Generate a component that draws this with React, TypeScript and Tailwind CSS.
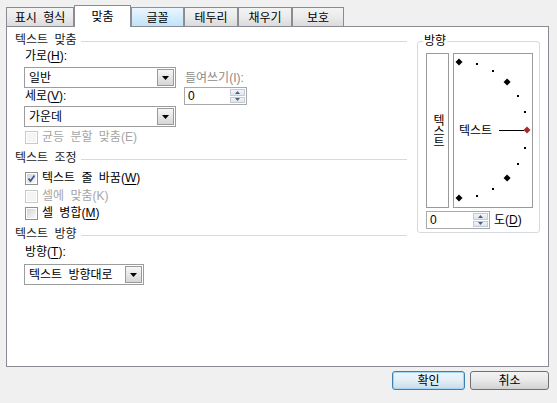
import type { ReactNode } from "react";

const tabs = [
  { label: "표시 형식", w: "w-[68px]" },
  { label: "맞춤", w: "w-[57px]", active: true },
  { label: "글꼴", w: "w-[53px]", hover: true },
  { label: "테두리", w: "w-[54px]" },
  { label: "채우기", w: "w-[54px]" },
  { label: "보호", w: "w-[52px]" },
];

// dial angles, 90 .. -90 in steps of 15
const angles = [90, 75, 60, 45, 30, 15, 0, -15, -30, -45, -60, -75, -90];

function U({ c }: { c: string }) {
  return <span className="underline underline-offset-[2px]">{c}</span>;
}

function Header({ title }: { title: string }) {
  return (
    <div className="flex h-[16px] items-center">
      <span className="text-[#1a1a1a]">{title}</span>
      <div className="ml-[4px] mt-[2px] h-px flex-1 bg-[#d5dadf]" />
    </div>
  );
}

function Arrow() {
  return (
    <svg width="7" height="4" viewBox="0 0 7 4">
      <polygon points="0,0 7,0 3.5,4" fill="#000" />
    </svg>
  );
}

function Dropdown({ value, w }: { value: string; w: string }) {
  return (
    <div
      className={`flex h-[21px] ${w} items-center border border-[#9c9c9c] bg-white pl-[4px] pr-[1px]`}
    >
      <span className="flex-1">{value}</span>
      <div className="flex h-[17px] w-[17px] items-center justify-center border border-[#9a9a9a] bg-linear-to-b from-[#f7f7f7] to-[#d6d6d6]">
        <Arrow />
      </div>
    </div>
  );
}

function Spin({ w }: { w: string }) {
  return (
    <div
      className={`flex h-[18px] ${w} items-stretch border border-[#a9a9a9] bg-white p-px`}
    >
      <span className="flex-1 pl-[2px] leading-[14px]">0</span>
      <div className="flex w-[15px] flex-col gap-px">
        <div className="flex flex-1 items-center justify-center border border-[#c3cbd6] bg-linear-to-b from-[#f2f5f9] to-[#dfe5ec]">
          <svg width="5" height="3" viewBox="0 0 5 3">
            <polygon points="2.5,0 5,3 0,3" fill="#4d6185" />
          </svg>
        </div>
        <div className="flex flex-1 items-center justify-center border border-[#c3cbd6] bg-linear-to-b from-[#f2f5f9] to-[#dfe5ec]">
          <svg width="5" height="3" viewBox="0 0 5 3">
            <polygon points="0,0 5,0 2.5,3" fill="#4d6185" />
          </svg>
        </div>
      </div>
    </div>
  );
}

function Check({
  checked,
  disabled,
  children,
}: {
  checked?: boolean;
  disabled?: boolean;
  children: ReactNode;
}) {
  return (
    <div className="flex h-[16px] items-center pl-[10px]">
      <div
        className={`flex h-[13px] w-[13px] items-center justify-center border p-px ${
          disabled ? "border-[#c9c9c9]" : "border-[#8e8f8f]"
        }`}
      >
        <div
          className={`relative h-full w-full ${
            disabled
              ? "bg-[#f4f4f4]"
              : "bg-linear-to-br from-[#d3d3d3] to-[#fafafa]"
          }`}
        >
          {checked ? (
            <svg
              className="absolute left-0 top-0"
              width="9"
              height="9"
              viewBox="0 0 9 9"
            >
              <path
                d="M1.5 4.5 L3.5 7 L7.5 1.5"
                stroke="#3c59a0"
                strokeWidth="1.8"
                fill="none"
              />
            </svg>
          ) : null}
        </div>
      </div>
      <span
        className={`ml-[4px] ${disabled ? "text-[#a6a6a6]" : "text-black"}`}
      >
        {children}
      </span>
    </div>
  );
}

function Dial() {
  const cx = 5;
  const cy = 76;
  const r = 68;
  return (
    <div className="relative h-[155px] w-[80px] border border-[#9a9a9a]">
      <svg width="78" height="153" viewBox="0 0 78 153">
        {angles.map((a) => {
          const x = cx + r * Math.cos((a * Math.PI) / 180);
          const y = cy - r * Math.sin((a * Math.PI) / 180);
          if (a === 0)
            return (
              <polygon
                key={a}
                points={`${x},${y - 3.5} ${x + 3.5},${y} ${x},${y + 3.5} ${x - 3.5},${y}`}
                fill="#a8282c"
              />
            );
          if (a % 45 === 0)
            return (
              <polygon
                key={a}
                points={`${x},${y - 3.5} ${x + 3.5},${y} ${x},${y + 3.5} ${x - 3.5},${y}`}
                fill="#000"
              />
            );
          return (
            <rect
              key={a}
              x={Math.round(x) - 1}
              y={Math.round(y) - 1}
              width="2"
              height="2"
              fill="#000"
            />
          );
        })}
        <line x1="45" y1="76.5" x2="70" y2="76.5" stroke="#000" strokeWidth="1" />
      </svg>
      <span className="absolute left-[5px] top-[69px] leading-[16px]">텍스트</span>
    </div>
  );
}

export default function App() {
  return (
    <div className="flex h-[403px] w-[557px] flex-col overflow-hidden bg-[#f0f0f0] font-['Liberation_Sans','Noto_Sans_CJK_KR',sans-serif] text-[12px] leading-none text-black [word-spacing:3px]">
      {/* tabs */}
      <div className="flex h-[26px] items-end pl-[6px]">
        {tabs.map((t) =>
          t.active ? (
            <div
              key={t.label}
              className={`relative z-10 -mb-px flex h-[22px] ${t.w} items-start justify-center border border-b-0 border-[#898c95] bg-white pt-[5px]`}
            >
              {t.label}
            </div>
          ) : (
            <div
              key={t.label}
              className={`flex h-[19px] ${t.w} items-center justify-center border border-b-0 pt-px ${
                t.hover
                  ? "border-[#6b9bc4] bg-linear-to-b from-[#eaf6fd] to-[#bfe3f9]"
                  : "border-[#898c95] bg-linear-to-b from-[#f3f3f3] via-[#ebebeb] to-[#dadada]"
              }`}
            >
              {t.label}
            </div>
          ),
        )}
      </div>

      {/* panel */}
      <div className="ml-[6px] flex h-[341px] w-[543px] border border-[#898c95] bg-white pl-[8px] pt-[5px]">
        {/* left column */}
        <div className="w-[392px]">
          <Header title="텍스트 맞춤" />
          <div className="flex pl-[9px]">
            <div className="w-[160px]">
              <div className="flex h-[16px] items-center pl-px">
                가로(<U c="H" />):
              </div>
              <div className="mt-[3px]">
                <Dropdown value="일반" w="w-[152px]" />
              </div>
              <div className="flex h-[16px] items-center pl-px">
                세로(<U c="V" />):
              </div>
              <div className="mt-[2px]">
                <Dropdown value="가운데" w="w-[152px]" />
              </div>
            </div>
            <div className="pt-[22px]">
              <div className="flex h-[16px] items-center pl-px text-[#8a8a8a]">
                들여쓰기(I):
              </div>
              <div className="mt-px">
                <Spin w="w-[63px]" />
              </div>
            </div>
          </div>
          <div className="mt-[2px]">
            <Check disabled>균등 분할 맞춤(E)</Check>
          </div>
          <div className="mt-[5px]">
            <Header title="텍스트 조정" />
          </div>
          <div className="mt-[4px]">
            <Check checked>
              텍스트 줄 바꿈(<U c="W" />)
            </Check>
          </div>
          <div className="mt-[2px]">
            <Check disabled>셀에 맞춤(K)</Check>
          </div>
          <div className="mt-px">
            <Check>
              셀 병합(<U c="M" />)
            </Check>
          </div>
          <div className="mt-[5px]">
            <Header title="텍스트 방향" />
          </div>
          <div className="mt-[2px] flex h-[16px] items-center pl-[10px]">
            방향(<U c="T" />):
          </div>
          <div className="mt-[4px] pl-[9px]">
            <Dropdown value="텍스트 방향대로" w="w-[120px]" />
          </div>
        </div>

        {/* right group */}
        <div className="relative ml-[10px] mt-[9px] h-[192px] w-[123px] rounded-[3px] border border-[#d5dadf] pl-[8px] pt-[11px]">
          <span className="absolute -top-[8px] left-[5px] bg-white px-px leading-[14px]">
            방향
          </span>
          <div className="flex gap-[4px]">
            <div className="flex h-[155px] w-[23px] items-center justify-center border border-[#9a9a9a]">
              <span className="tracking-[-1px] [text-orientation:upright] [writing-mode:vertical-rl]">
                텍스트
              </span>
            </div>
            <Dial />
          </div>
          <div className="mt-[3px] flex items-center">
            <Spin w="w-[64px]" />
            <span className="ml-[4px]">
              도(<U c="D" />)
            </span>
          </div>
        </div>
      </div>

      {/* buttons */}
      <div className="mt-[4px] flex justify-end gap-[5px] pr-[8px]">
        <div className="flex h-[19px] w-[73px] items-center justify-center rounded-[3px] border border-[#3c7fb1] bg-linear-to-b from-[#eef6fb] via-[#e3eef6] to-[#c7dcea] shadow-[inset_0_0_0_1px_#a8d6f2]">
          확인
        </div>
        <div className="flex h-[19px] w-[79px] items-center justify-center rounded-[3px] border border-[#707070] bg-linear-to-b from-[#f3f3f3] via-[#e8e8e8] to-[#d2d2d2]">
          취소
        </div>
      </div>
    </div>
  );
}
